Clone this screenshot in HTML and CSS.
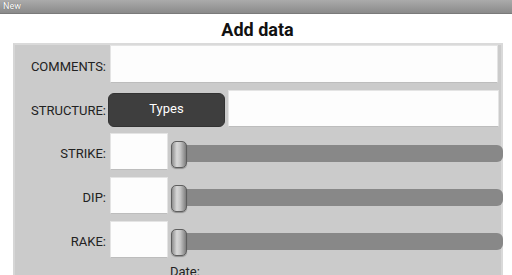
FILE: index.html
```html
<!DOCTYPE html>
<html lang="en">
<head>
    <meta charset="UTF-8">
    <meta name="viewport" content="width=device-width, initial-scale=1.0">
    <title>New</title>
    <link rel="stylesheet" href="styles.css">
</head>
<body>

    <div class="title-bar">New</div>

    <h1>Add data</h1>

    <div class="form-panel">

        <div class="form-row row-comments">
            <label for="comments">COMMENTS:</label>
            <input type="text" id="comments" class="text-field wide">
        </div>

        <div class="form-row row-structure">
            <label for="structure">STRUCTURE:</label>
            <button class="btn-types">Types</button>
            <input type="text" id="structure" class="text-field wide">
        </div>

        <div class="form-row row-angle">
            <label for="strike">STRIKE:</label>
            <input type="text" id="strike" class="text-field small">
            <div class="slider"><div class="slider-track"></div><div class="slider-thumb"></div></div>
        </div>

        <div class="form-row row-angle">
            <label for="dip">DIP:</label>
            <input type="text" id="dip" class="text-field small">
            <div class="slider"><div class="slider-track"></div><div class="slider-thumb"></div></div>
        </div>

        <div class="form-row row-angle">
            <label for="rake">RAKE:</label>
            <input type="text" id="rake" class="text-field small">
            <div class="slider"><div class="slider-track"></div><div class="slider-thumb"></div></div>
        </div>

        <div class="date-row">Date:</div>

    </div>

</body>
</html>
```

FILE: styles.css
```css
/* Basic Reset */
* {
    margin: 0;
    padding: 0;
    box-sizing: border-box;
}

body {
    font-family: Roboto, 'Liberation Sans', sans-serif;
    background-color: #ffffff;
    color: #1a1a1a;
    width: 512px;
    height: 275px;
    overflow: hidden;
}

/* Window title bar */
.title-bar {
    height: 14px;
    background: linear-gradient(#ababab, #8a8a8a);
    border-bottom: 1px solid #7a7a7a;
    color: #ffffff;
    font-size: 9px;
    line-height: 13px;
    padding-left: 3px;
    text-shadow: 0 0 1px rgba(0, 0, 0, 0.4);
}

/* Heading */
h1 {
    font-size: 18px;
    font-weight: bold;
    color: #111111;
    text-align: center;
    height: 29px;
    line-height: 32px;
    padding-left: 3px;
}

/* Grey form panel */
.form-panel {
    margin-left: 13px;
    width: 490px;
    height: 240px;
    background-color: #cbcbcb;
    border-top: 2px solid #dadada;
    border-left: 2px solid #d6d6d6;
    border-right: 2px solid #d9d9d9;
}

.form-row {
    display: flex;
    align-items: center;
}

label {
    width: 95px;
    padding-right: 4px;
    padding-top: 4px;
    text-align: right;
    font-size: 13px;
    color: #222222;
    flex-shrink: 0;
}

/* Text fields */
.text-field {
    background-color: #fdfdfd;
    border: 1px solid #e4e4e4;
    border-bottom: 1px solid #bdbdbd;
    outline: none;
    font-family: inherit;
}

.wide {
    flex: 1;
}

.small {
    width: 58px;
    height: 37px;
}

.row-comments {
    height: 38px;
    padding-right: 3px;
}

.row-comments .text-field {
    height: 38px;
}

.row-structure {
    margin-top: 7px;
    height: 37px;
    padding-right: 2px;
}

.row-structure .text-field {
    height: 37px;
    margin-left: 3px;
}

/* Dark Types button */
.btn-types {
    width: 117px;
    height: 34px;
    margin-top: 3px;
    margin-left: -2px;
    background-color: #3e3e3e;
    color: #ffffff;
    border: 1px solid #333333;
    border-radius: 6px;
    font-family: inherit;
    font-size: 13px;
    padding-bottom: 4px;
}

.row-angle {
    margin-top: 6px;
    height: 37px;
}

.row-angle + .row-angle {
    margin-top: 7px;
}

/* Slider */
.slider {
    position: relative;
    flex: 1;
    height: 37px;
    margin-left: 3px;
}

.slider-track {
    position: absolute;
    left: 7px;
    right: -2px;
    top: 12px;
    height: 17px;
    background-color: #888888;
    border-radius: 0 6px 6px 0;
}

.slider-thumb {
    position: absolute;
    left: 0;
    top: 8px;
    width: 16px;
    height: 27px;
    border: 1px solid #5e5e5e;
    border-radius: 5px;
    background: linear-gradient(to right, #8f8f8f, #d8d8d8 35%, #c4c4c4 60%, #7d7d7d);
    box-shadow: 0 1px 1px rgba(0, 0, 0, 0.3);
}

.date-row {
    margin-top: 6px;
    padding-left: 155px;
    font-size: 13px;
    color: #222222;
}
```
